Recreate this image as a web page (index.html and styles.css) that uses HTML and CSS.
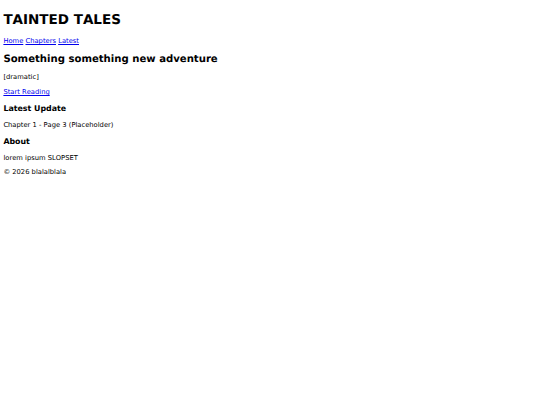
FILE: index.html
```html
<!DOCTYPE html>
<html lang="en">
<head>
<meta charset="utf-8">
<title>Tainted Tales</title>
<link rel="stylesheet" href="styles.css">
</head>
<body>
<header>
  <h1>TAINTED TALES</h1>
  <nav class="site-nav">
    <a href="#">Home</a>
    <a href="#">Chapters</a>
    <a href="#">Latest</a>
  </nav>
</header>
<main>
  <section class="hero">
    <h2>Something something new adventure</h2>
    <p>[dramatic]</p>
    <p><a href="#">Start Reading</a></p>
  </section>
  <section class="latest">
    <h3>Latest Update</h3>
    <p>Chapter 1 - Page 3 (Placeholder)</p>
  </section>
  <section class="about">
    <h3>About</h3>
    <p>lorem ipsum SLOPSET</p>
  </section>
</main>
<footer>
  <p>&copy; 2026 blalalblala</p>
</footer>
</body>
</html>
```
FILE: styles.css
```css
/* Small, plain document: every size scales from the body font size */
body {
  margin: 3.375px;
  font-family: "DejaVu Sans", sans-serif;
  font-size: 6.75px;
  color: #000;
  text-rendering: geometricPrecision;
  font-kerning: none;
}

a {
  color: #0000ee;
}

h1 {
  font-size: 2em;
  margin: 0.67em 0;
}

h2 {
  font-size: 1.5em;
  margin: 0.83em 0;
}

h3 {
  font-size: 1.17em;
  margin: 1em 0;
}

p {
  margin: 1em 0;
}

.site-nav {
  display: block;
}
```
